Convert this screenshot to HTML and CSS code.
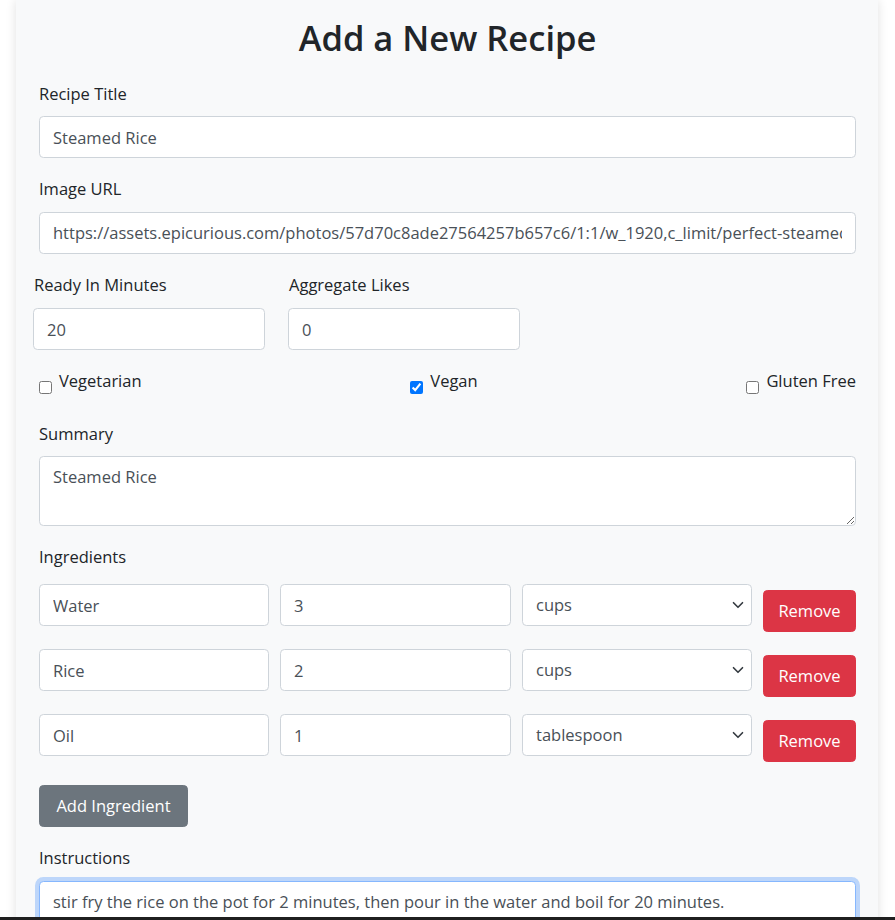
FILE: index.html
```html
<!DOCTYPE html>
<html lang="en">
<head>
<meta charset="utf-8">
<title>Add a New Recipe</title>
<link rel="stylesheet" href="styles.css">
</head>
<body>
<div class="page">
  <form class="card">
    <h2 class="title">Add a New Recipe</h2>

    <div class="field">
      <label class="label">Recipe Title</label>
      <input class="control" type="text" value="Steamed Rice">
    </div>

    <div class="field">
      <label class="label">Image URL</label>
      <input class="control" type="text" value="https://assets.epicurious.com/photos/57d70c8ade27564257b657c6/1:1/w_1920,c_limit/perfect-steamed-rice.jpg">
    </div>

    <div class="pair">
      <div class="pair-col">
        <label class="label">Ready In Minutes</label>
        <input class="control" type="text" value="20">
      </div>
      <div class="pair-col">
        <label class="label">Aggregate Likes</label>
        <input class="control" type="text" value="0">
      </div>
    </div>

    <div class="checks">
      <label class="check"><input type="checkbox" class="box"><span>Vegetarian</span></label>
      <label class="check"><input type="checkbox" class="box" checked><span>Vegan</span></label>
      <label class="check"><input type="checkbox" class="box"><span>Gluten Free</span></label>
    </div>

    <div class="field">
      <label class="label">Summary</label>
      <textarea class="control area">Steamed Rice</textarea>
    </div>

    <div class="ingredients">
      <label class="label">Ingredients</label>
      <div class="ing-row">
        <input class="control ing-name" type="text" value="Water">
        <input class="control ing-qty" type="text" value="3">
        <div class="select-wrap">
          <select class="control select"><option>cups</option></select>
          <svg class="chev" width="12" height="12" viewBox="0 0 16 16"><path d="M2 5l6 6 6-6" fill="none" stroke="#343a40" stroke-width="2.2" stroke-linecap="round" stroke-linejoin="round"/></svg>
        </div>
        <button type="button" class="btn btn-danger">Remove</button>
      </div>
      <div class="ing-row">
        <input class="control ing-name" type="text" value="Rice">
        <input class="control ing-qty" type="text" value="2">
        <div class="select-wrap">
          <select class="control select"><option>cups</option></select>
          <svg class="chev" width="12" height="12" viewBox="0 0 16 16"><path d="M2 5l6 6 6-6" fill="none" stroke="#343a40" stroke-width="2.2" stroke-linecap="round" stroke-linejoin="round"/></svg>
        </div>
        <button type="button" class="btn btn-danger">Remove</button>
      </div>
      <div class="ing-row">
        <input class="control ing-name" type="text" value="Oil">
        <input class="control ing-qty" type="text" value="1">
        <div class="select-wrap">
          <select class="control select"><option>tablespoon</option></select>
          <svg class="chev" width="12" height="12" viewBox="0 0 16 16"><path d="M2 5l6 6 6-6" fill="none" stroke="#343a40" stroke-width="2.2" stroke-linecap="round" stroke-linejoin="round"/></svg>
        </div>
        <button type="button" class="btn btn-danger">Remove</button>
      </div>
      <button type="button" class="btn btn-secondary">Add Ingredient</button>
    </div>

    <div class="field">
      <label class="label">Instructions</label>
      <textarea class="control area focus">stir fry the rice on the pot for 2 minutes, then pour in the water and boil for 20 minutes.</textarea>
    </div>
  </form>
</div>
<div class="taskbar"></div>
</body>
</html>
```
FILE: styles.css
```css
* { box-sizing: border-box; }
html, body { margin: 0; padding: 0; background: #fff; }
body {
  font-family: "Open Sans", "Noto Sans", sans-serif;
  font-size: 16.5px;
  line-height: 26.4px;
  color: #212529;
  overflow: hidden;
  height: 920px;
}
.page { padding: 0 17px 0 16px; }
.card {
  background: #f8f9fa;
  box-shadow: 0 0 10px rgba(0, 0, 0, 0.12);
  padding: 17px 22px 40px 23px;
  min-height: 1000px;
}
.title {
  margin: 0 0 22px;
  font-size: 34.5px;
  line-height: 42px;
  font-weight: 600;
  text-align: center;
  color: #212529;
}
.field { margin-bottom: 18px; }
.label { display: block; margin-bottom: 9px; }
.control {
  display: block;
  width: 100%;
  height: 42px;
  padding: 6px 13px;
  font: inherit;
  color: #495057;
  background: #fff;
  border: 1px solid #ced4da;
  border-radius: 4.4px;
  outline: none;
}
.pair { display: flex; gap: 23px; margin-left: -6px; margin-bottom: 18px; }
.pair-col { width: 232px; }
.pair-col .label { margin-left: 1px; margin-bottom: 10px; }
.checks {
  display: flex;
  justify-content: space-between;
  margin-bottom: 26px;
}
.check { display: flex; align-items: flex-end; }
.box {
  width: 13px;
  height: 13px;
  margin: 0 7px 1px 0;
  accent-color: #0075ff;
}
.area { height: 70px; resize: vertical; padding-top: 7px; line-height: 26.4px; }
.ingredients { margin-bottom: 18px; }
.ingredients .label { margin-bottom: 14px; }
.ing-row { display: flex; gap: 11px; margin-bottom: 17px; align-items: flex-start; }
.ing-row > .control { flex: 0 0 230px; width: 230px; }
.ing-row > .ing-qty { flex-basis: 231px; width: 231px; }
.select-wrap { position: relative; flex: 0 0 230px; width: 230px; }
.select { appearance: none; -webkit-appearance: none; padding-right: 36px; }
.chev { position: absolute; right: 8px; top: 15px; }
.btn {
  font: inherit;
  height: 42px;
  padding: 0 13px;
  border: 1px solid transparent;
  border-radius: 4.4px;
  color: #fff;
  cursor: pointer;
}
.btn-danger { background: #dc3545; border-color: #dc3545; margin-top: 6px; width: 93px; flex: none; }
.btn-secondary { background: #6c757d; border-color: #6c757d; width: 149px; display: block; margin-top: 23px; }
.ing-row:last-of-type { margin-bottom: 0; }
.focus {
  border-color: #86b7fe;
  box-shadow: 0 0 0 4px rgba(13, 110, 253, 0.25);
  height: 90px;
}
.taskbar {
  position: fixed;
  left: 0;
  right: 0;
  bottom: 0;
  height: 3px;
  background: #1f1f1f;
}
```
